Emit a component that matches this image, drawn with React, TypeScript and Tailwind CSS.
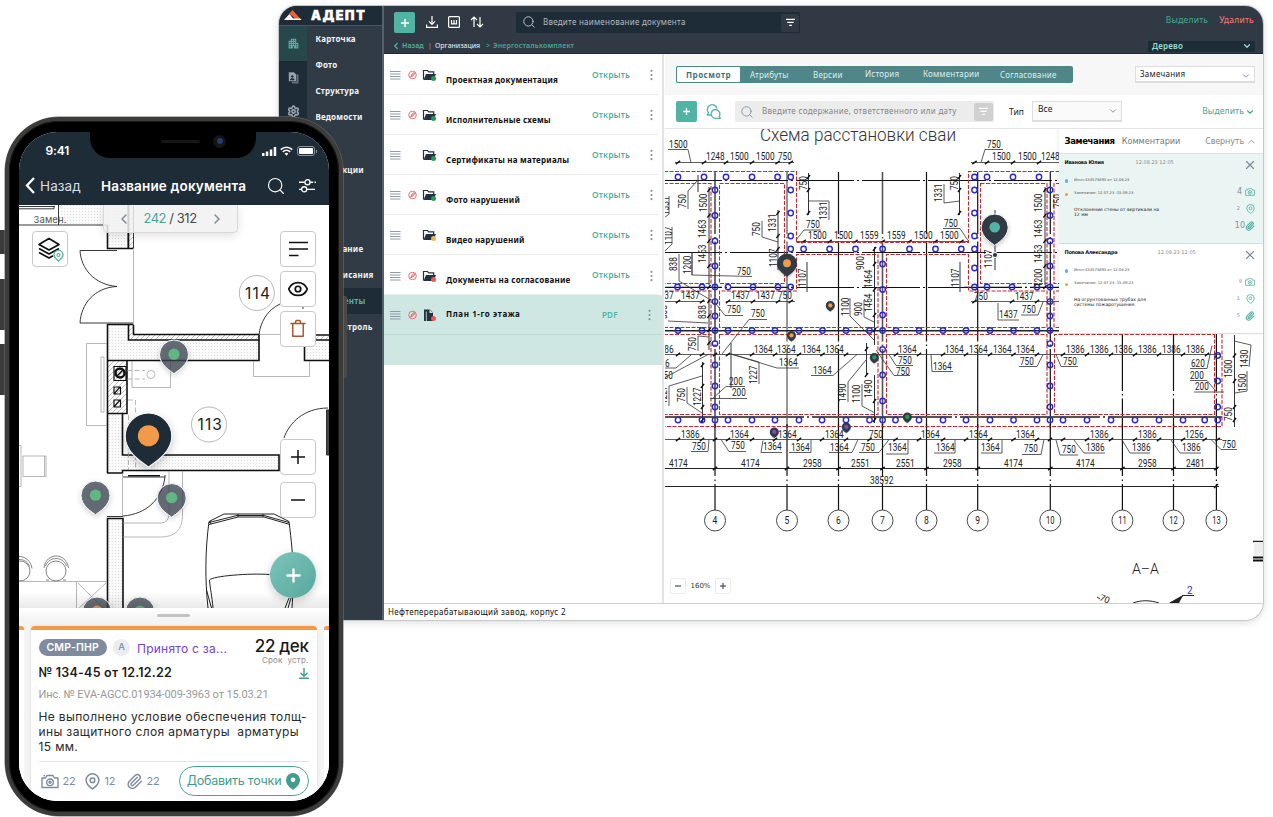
import React from "react";
import { Search, Settings, X, ChevronDown, ChevronUp, ChevronLeft, ChevronRight, Paperclip, Eye } from "lucide-react";
import { MdApartment } from "react-icons/md";

const DARK = "#1e2c38";
const TEAL = "#52b2a4";

/* ---------- shared drawings ---------- */

function Pin({ x, y, w, fill, dot, opacity = 1, outline = false }: { x: number; y: number; w: number; fill: string; dot: string; opacity?: number; outline?: boolean }) {
  const s = w / 46;
  return (
    <g transform={`translate(${x - w / 2} ${y}) scale(${s})`} style={{ filter: "drop-shadow(0 3px 4px rgba(0,0,0,.22))" }}>
      <path
        d="M23 53.5C19 50 0 40 0 23A23 23 0 0 1 46 23C46 40 27 50 23 53.5Z"
        fill={fill}
        fillOpacity={opacity}
        stroke={outline ? "#fff" : "none"}
        strokeWidth={outline ? 1 / s : 0}
      />
      <circle cx="23" cy="22.5" r={w < 12 ? 11 : w > 40 ? 10.5 : 9} fill={dot} />
    </g>
  );
}

function Camera({ className }: { className: string }) {
  return (
    <svg viewBox="0 0 18 14" className={className} fill="none" stroke="currentColor" strokeWidth="1.4">
      <path d="M1 3.5h3.6L6 1h6l1.400 2.500H17V13H1z" strokeLinejoin="round" />
      <circle cx="9" cy="7.800" r="3.300" />
      <circle cx="9" cy="7.800" r="1" />
      <path d="M2.500 1.200h1.500" />
    </svg>
  );
}

function PinOutline({ className }: { className: string }) {
  return (
    <svg viewBox="0 0 14 16" className={className} fill="none" stroke="currentColor" strokeWidth="1.4">
      <path d="M7 15C5.500 13.800 1 11.200 1 6.800a6 6 0 0 1 12 0C13 11.200 8.500 13.800 7 15z" strokeLinejoin="round" />
      <circle cx="7" cy="6.800" r="2.200" />
    </svg>
  );
}

function FilterLines({ className }: { className: string }) {
  return (
    <svg viewBox="0 0 10 10" className={className} stroke="currentColor" strokeWidth="1.3">
      <path d="M0 1.500h10M1.500 4.800h7M3.500 8.200h3" />
    </svg>
  );
}

/* ---------- sidebar ---------- */

const MENU = ["Карточка", "Фото", "Структура", "Ведомости", "", "Инспекции", "", "", "Замечание", "Предписания", "Документы", "Тех-контроль"];

function Sidebar() {
  return (
    <aside className="flex w-[105px] shrink-0 flex-col bg-[#56636e] pr-[2.5px]">
      <div className="flex h-[19.5px] shrink-0 items-center border-b border-[#4a5661] bg-[#1e2c38] pl-[5px]">
        <svg viewBox="0 0 18 10" className="h-[10px] w-[18px]">
          <path d="M0 10L5.500 4L9 8.500V10z" fill="#fff" />
          <path d="M5 4L8.500 0L17.500 10H12L8.500 6z" fill="#f0603a" />
          <path d="M8 8.500h8l1.500 1.500H8z" fill="#fff" />
        </svg>
        <span className="ml-[9px] mt-px font-[Inter] text-[12.5px] leading-none font-black tracking-[1.700px] text-white [-webkit-text-stroke:0.500px_#fff]">АДЕПТ</span>
      </div>
      <div className="flex min-h-0 flex-1">
        <div className="flex w-[28px] shrink-0 flex-col items-center bg-[#1e2c38]">
          <div className="flex h-[35px] w-full items-center justify-center bg-[#27474b] text-[#52b2a4]">
            <MdApartment className="size-[13px]" />
          </div>
          <div className="flex h-[34px] items-center">
            <svg viewBox="0 0 11 12" className="h-[12px] w-[11px]">
              <path d="M4 2.500h6.500V11.500H4z" fill="#66727d" />
              <path d="M.5 0H6l2.500 2.500V9.500H.5z" fill="#98a3ad" stroke="#1e2c38" strokeWidth=".6" />
              <circle cx="4.300" cy="4.500" r="1.200" fill={DARK} />
              <path d="M2 8.300c0-2.600 4.600-2.600 4.600 0z" fill={DARK} />
            </svg>
          </div>
          <div className="flex h-[34px] items-center text-[#98a3ad]">
            <Settings className="size-[13px]" strokeWidth={3} />
          </div>
        </div>
        <nav className="flex flex-1 flex-col bg-[#313b45]">
          {MENU.map((m, i) => (
            <span
              key={i}
              className={
                i === 10
                  ? "flex h-[26.25px] items-center whitespace-nowrap bg-[#1e2c38] pl-[8.500px] font-['Noto_Sans'] text-[8px] font-bold tracking-[0.200px] text-[#52b2a4]"
                  : "flex h-[26.25px] items-center whitespace-nowrap pl-[8.500px] font-['Noto_Sans'] text-[8px] font-bold tracking-[0.200px] text-[#f2f4f5]"
              }
            >
              {m}
            </span>
          ))}
        </nav>
      </div>
    </aside>
  );
}

/* ---------- header ---------- */

function Header() {
  return (
    <header className="flex h-[48px] shrink-0 flex-col border-b border-[#1e2c38] bg-[#313a44] font-['Noto_Sans']">
      <div className="flex h-[33px] items-center pl-[10px] pr-[9px]">
        <button className="flex size-[21px] items-center justify-center rounded-[2px] bg-[#52b2a4]">
          <svg viewBox="0 0 8 8" className="size-[8px]" stroke="#fff" strokeWidth="1.500"><path d="M4 0v8M0 4h8" /></svg>
        </button>
        <svg viewBox="0 0 12 12" className="mb-px ml-[11px] size-[12px]" fill="none" stroke="#fff" strokeWidth="1.200">
          <path d="M6 0v8M3 5.300l3 3 3-3M.6 8.500v2.900h10.800V8.500" />
        </svg>
        <svg viewBox="0 0 12 12" className="mb-px ml-[10px] size-[12px]" fill="none" stroke="#fff" strokeWidth="1.200">
          <rect x=".6" y=".6" width="10.800" height="10.800" rx="1" />
          <path d="M3.500 4v3.800h5V4M6 4v3.500" strokeWidth="1.200" />
        </svg>
        <svg viewBox="0 0 14 12" className="mb-px ml-[10px] h-[12px] w-[14px]" fill="none" stroke="#fff" strokeWidth="1.200">
          <path d="M4 11V1M1 4l3-3 3 3M10 1v10M7 8l3 3 3-3" />
        </svg>
        <div className="ml-[32px] flex h-[21px] w-[284px] items-center rounded-[2px] bg-[#1e2c38] pl-[6px] pr-px">
          <Search className="mb-px size-[14px] text-[#b9c0c6]" strokeWidth={1.700} />
          <span className="ml-[7px] whitespace-nowrap pb-[2px] text-[8px] tracking-[0.240px] text-[#b4bbc1]">Введите наименование документа</span>
          <span className="ml-auto flex size-[18px] items-center justify-center rounded-[2px] bg-[#313a44] text-white">
            <FilterLines className="size-[9px]" />
          </span>
        </div>
        <span className="ml-auto mt-[-4px] text-[8.500px] tracking-[0.200px] text-[#4aa595]">Выделить</span>
        <span className="ml-[11px] mt-[-4px] text-[8.500px] tracking-[0.250px] text-[#f28078]">Удалить</span>
      </div>
      <div className="flex h-[14px] items-center whitespace-nowrap pl-[7px] pr-[8px] text-[7px]">
        <ChevronLeft className="size-[10px] text-[#52b2a4]" strokeWidth={3} />
        <span className="ml-px w-[26px] font-bold text-[#4aa595]">Назад</span>
        <span className="w-[7px] text-[#99a3ab]">|</span>
        <span className="w-[51px] text-[#eef0f1]">Организация</span>
        <span className="w-[7px] text-[#4aa595]">&gt;</span>
        <span className="font-semibold tracking-[0.150px] text-[#4aa595]">Энергосталькомплект</span>
        <span className="ml-auto flex h-[11px] w-[107px] items-center justify-between bg-[#1e2c38] pl-[4px] pr-[3px] text-[8px] font-semibold tracking-[0.200px] text-[#8fe0d3]">
          Дерево
          <ChevronDown className="size-[10px]" strokeWidth={3} />
        </span>
      </div>
    </header>
  );
}

/* ---------- document list ---------- */

const DOCS = [
  { name: "Проектная документация", mark: true, dot: "#1f9d55" },
  { name: "Исполнительные схемы", mark: true, dot: "#1f9d55" },
  { name: "Сертификаты на материалы", mark: false, dot: "#1f9d55" },
  { name: "Фото нарушений", mark: true, dot: "#1f9d55" },
  { name: "Видео нарушений", mark: false, dot: "#f5b254" },
  { name: "Документы на согласование", mark: true, dot: "#f25555" },
];

function RowIcons({ mark, dot, file }: { mark: boolean; dot: string; file?: boolean }) {
  return (
    <svg viewBox="0 0 48 14" className="h-[14px] w-[48px] shrink-0">
      <path d="M0 3.500h10.500M0 6h10.500M0 8.500h10.500M0 11h10.500" stroke="#8f9baa" strokeWidth="1" />
      {mark && (
        <g fill="none" stroke="#f0605c" strokeWidth=".9">
          <circle cx="22.500" cy="7" r="3.800" />
          <path d="M19.800 9.700l5.400-5.400M21 8.500l.6-2 2.200-1.800 1 1-1.800 2.200z" />
        </g>
      )}
      {file ? (
        <g>
          <path d="M34 1.500h6l3 3V13h-9z" fill="#25323e" />
          <path d="M39.500 1.500v3.500h3.500z" fill="#cfe7e3" />
          <path d="M36.300 3.500v9.500" stroke="#cfe7e3" strokeWidth=".8" />
        </g>
      ) : (
        <g>
          <path d="M33.500 11.500V2.500h4l1.200 1.300h5V6" fill="none" stroke="#25323e" strokeWidth="1.200" />
          <path d="M33.500 12l2.500-6h10l-2.500 6z" fill="#25323e" />
        </g>
      )}
      <circle cx="43.500" cy="10.500" r="2.500" fill={dot} />
    </svg>
  );
}

function Dots() {
  return (
    <svg viewBox="0 0 3 12" className="h-[12px] w-[3px]" fill="#8793a1">
      <circle cx="1.500" cy="1.800" r="1.100" /><circle cx="1.500" cy="6" r="1.100" /><circle cx="1.500" cy="10.200" r="1.100" />
    </svg>
  );
}

function DocList() {
  return (
    <section className="flex w-[280px] shrink-0 flex-col border-r-2 border-[#e2e4e4] bg-white pt-[0.500px] font-['Noto_Sans']">
      {DOCS.map((d) => (
        <div key={d.name} className="mr-[4px] flex h-[40.100px] items-center border-b border-[#ececec] pt-[2px] pl-[6px]">
          <RowIcons mark={d.mark} dot={d.dot} />
          <span className="ml-[8px] w-[146px] whitespace-nowrap pt-[9px] text-[8px] font-bold tracking-[0.230px] text-[#101010]">{d.name}</span>
          <span className="w-[58px] text-[8.500px] font-semibold tracking-[0.150px] text-[#52b2a4]">Открыть</span>
          <Dots />
        </div>
      ))}
      <div className="h-[70px] bg-[#cfe7e3]">
        <div className="flex h-[39.500px] items-center border-b border-[#bfdad6] pt-px pl-[6px]">
          <RowIcons mark dot="#f25555" file />
          <span className="ml-[8px] w-[156px] whitespace-nowrap pb-px text-[8px] font-bold tracking-[0.600px] text-[#101010]">План 1-го этажа</span>
          <span className="w-[46px] text-[8px] font-semibold tracking-[0.200px] text-[#52b2a4]">PDF</span>
          <Dots />
        </div>
      </div>
    </section>
  );
}

/* ---------- pile plan ---------- */

type Label = [number, number, string];

const H_LABELS: Label[] = [
  [669, 148, "1500"], [706, 160, "1248"], [730, 160, "1500"], [756, 160, "1500"], [778, 160, "750"],
  [987, 148, "750"], [992, 160, "1500"], [1018, 160, "1500"], [1041, 160, "1248"],
  [806, 228, "750"], [944, 227, "750"],
  [808, 239, "1500"], [834, 239, "1500"], [860, 239, "1559"], [887, 239, "1559"], [914, 239, "1500"], [940, 239, "1500"],
  [737, 275, "750"], [731, 299, "1437"], [756, 299, "1437"], [778, 299, "750"], [655, 299, "1437"], [681, 299, "1437"],
  [727, 313, "750"], [751, 317, "750"],
  [655, 353, "1386"], [754, 353, "1364"], [777, 353, "1364"], [802, 353, "1364"], [825, 353, "1364"], [898, 353, "1364"], [945, 353, "1364"],
  [969, 353, "1364"], [993, 353, "1364"], [1016, 353, "1364"],
  [1066, 353, "1386"], [1090, 353, "1386"], [1114, 353, "1386"], [1138, 353, "1386"], [1162, 353, "1386"], [1186, 353, "1386"],
  [779, 366, "1364"], [813, 374, "1364"], [898, 364, "750"], [896, 375, "750"], [933, 370, "1364"],
  [729, 385, "200"], [732, 396, "200"], [651, 367, "1386"], [659, 379, "750"],
  [681, 438, "1386"], [730, 438, "1364"], [778, 438, "1364"], [825, 438, "1364"], [869, 438, "750"], [921, 438, "1364"],
  [969, 438, "1364"], [1016, 438, "1364"], [1090, 438, "1386"], [1138, 438, "1386"], [1185, 438, "1256"],
  [692, 450, "750"], [731, 449, "750"], [763, 450, "1364"], [791, 451, "1364"], [830, 451, "1364"], [861, 451, "750"],
  [888, 451, "1364"], [936, 451, "1364"], [981, 451, "1364"], [1024, 452, "750"], [1062, 453, "750"],
  [1086, 451, "1386"], [1132, 451, "1386"], [1182, 451, "1386"], [1222, 448, "750"],
  [669, 467, "4174"], [741, 467, "4174"], [803, 467, "2958"], [851, 467, "2551"], [896, 467, "2551"], [943, 467, "2958"],
  [1004, 467, "4174"], [1076, 467, "4174"], [1138, 467, "2958"], [1186, 467, "2481"], [870, 484, "38592"],
  [974, 300, "750"], [1015, 300, "1437"], [999, 318, "1437"], [1022, 313, "750"],
  [1020, 365, "750"], [1063, 365, "750"], [1191, 367, "620"], [1190, 379, "200"], [1195, 390, "200"],
];

const V_LABELS: Label[] = [
  [686, 208, "750"], [707, 212, "1500"], [706, 238, "1463"], [706, 263, "1463"], [691, 274, "1200"], [677, 271, "838"], [706, 319, "838"],
  [760, 236, "750"], [776, 232, "1331"], [777, 267, "1107"], [807, 190, "750"], [827, 220, "1331"], [942, 202, "1331"], [958, 190, "750"],
  [806, 287, "1107"], [959, 287, "1107"], [864, 270, "900"], [872, 288, "1464"], [872, 312, "1464"], [862, 316, "900"], [849, 316, "1100"],
  [669, 215, "1331"], [672, 245, "1107"], [667, 319, "838"], [696, 351, "750"], [685, 402, "750"], [701, 406, "1227"], [667, 404, "1227"], [757, 384, "1227"],
  [846, 402, "1490"], [860, 403, "1100"], [872, 398, "1490"],
  [1042, 212, "1500"], [1042, 238, "1463"], [1042, 263, "1463"], [1042, 287, "1200"], [1061, 208, "750"], [992, 268, "1107"],
  [1232, 378, "1500"], [1232, 421, "750"], [1248, 368, "1430"], [1246, 392, "1500"],
];

const LEADERS =
  "M668 149.500h20l3 13M985 149.500h18M985 149.500l-4 13M821 230h-17l-8 10M943 228.500h17l8 12M752 276.500L692 275V252M743 315.500h-18l-11-14M767 319.500h-18L722 354" +
  "M799 368h-22L731 354M811 375.500h22L857 354.500M913 365.500h-17l-7-11M910 375.500h-16L876 350M953 371.500h-21l-1-17M745 386.500h-19L712 399M710 398.500h37M691 451.500h17l1-12M746 451.500h-17l-8-12" +
  "M782 452.500h-21l2-12M789 452.500h22v-13M829 452.500h23l6-13M859 452.500h20l10-13M886 454h22v-14M934 453h21v-13M981 453h21v-13M1022 454.500h19l3-15M1078 455h-18l-4-15" +
  "M1105 453h-21l-10-13M1150 453h-20l-8-13M1201 453h-21l-9-13M1237 449.500h-16l-10-10M998 320h21M998 320v-17M1021 315h17l5-13M1019 366.500h18l6-12M1078 366.500h-17l-5-12" +
  "M1190 368.500h17l5-23M1190 380.500h17l10 12M1194 392h30M688 209v-18l10-11M692 275v-22M679 254v27l30 18M668 321l40 2M672 227v17l-8 8M669 196v18l-5 4M762 221v16l16 5M829 220v-19h-20M944 184v19l16-2" +
  "M850 298v18l24 24M864 300v17l10 5M698 351V336l11 1M687 387v16l15 10M669 406V386l33-10M759 384V362l-28-8M848 402v-20l18-22M862 384v22l13 7M664 378l45-24M664 368h12l15-13M1249 367l2-22-17-4M1247 371v20l-12 2";

const V_DIMS = "M709 187v98M698 175v17M778 210v60M808.500 173v42M959.500 173v42M807 262v30M960 262v30M874.500 247v98M866.500 343v32M874.500 375v48M709 290v60M702.500 362v60M731 343v45M1045 187v98M1234.500 335v92M995 210v60";

const PILES: number[][] = [
  [177, 678, 704, 726, 752, 777.6, 790.7, 974.5, 987, 1013, 1039],
  [249, 790.7, 803.6, 829.6, 855.5, 882.6, 909.5, 935.5, 961.3, 974.5],
  [287, 677.5, 702, 715, 728, 753, 778, 790.7, 974.5, 987, 1012, 1037, 1050],
  [330.5, 678, 702, 715, 728, 752, 775, 799, 822.5, 846, 869.5, 882.6, 896, 919, 943, 966, 990, 1013.5, 1037, 1050],
  [420, 678, 702, 715, 728, 752, 775, 799, 822, 846, 869.5, 882.6, 895.5, 919, 943, 966, 990, 1013.5, 1037, 1050, 1063, 1087, 1111, 1135, 1159, 1183, 1204.7, 1217.7],
];
const PILE_COLS: number[][] = [
  [715, 190, 215.5, 241, 266, 301.6, 316, 343.6, 365, 386, 407],
  [790.7, 190, 213, 236],
  [882.6, 264, 289.5, 315, 349.5, 375, 401],
  [974.5, 190, 213, 236, 268],
  [1050, 190, 215.5, 241, 266, 301.6, 316, 343.6, 365, 386, 407],
  [1217.7, 355.5, 381, 407],
];
const AXES: [number, number][] = [[715, 4], [787, 5], [838.5, 6], [882.5, 7], [926.5, 8], [977.7, 9], [1050.3, 10], [1122.4, 11], [1173.5, 12], [1216.4, 13]];
const TICKS: number[][] = [
  [162.5, 678, 704, 726, 752, 777.6, 790.7, 974.5, 987, 1013, 1039],
  [241.500, 803.6, 829.6, 855.5, 882.6, 909.5, 935.5, 961.3],
  [301.500, 678, 702, 728, 753, 778, 790.7, 974.5, 1012, 1037],
  [354.500, 678, 702, 715, 728, 752, 775, 799, 822.5, 846, 896, 919, 943, 966, 990, 1013.5, 1037, 1063, 1087, 1111, 1135, 1159, 1183, 1207],
  [439.500, 678, 702, 715, 728, 752, 775, 799, 822, 846, 869.5, 895.5, 919, 943, 966, 990, 1013.5, 1037, 1050, 1063, 1087, 1111, 1135, 1159, 1183, 1204.7, 1217.7],
  [468.500, 715, 787, 838.5, 882.5, 926.5, 977.7, 1050.3, 1122.4, 1173.5, 1216.4],
];
const V_TICKS: number[][] = [
  [709, 190, 215.5, 241, 266, 287, 301, 316, 330, 343],
  [778, 213, 236, 249], [808.5, 177, 190, 213], [959.5, 177, 190, 213], [874.5, 249, 264, 289.5, 315, 330, 401, 420],
  [866.5, 349, 375], [702.5, 365, 386, 407, 420], [1045, 190, 215.5, 241, 266, 287], [1234.500, 355.5, 381, 407, 420],
];

const RED =
  "M664 171.500h132.500v71h172v-71H1060M664 183.500h47v100h-47M719.500 183.500h65v100h-65zM664 291h47v36.500h-47M719.500 327.500V291h77v-36.500H878v73zM886.500 327.500v-73h82V291H1047v36.500zM980.500 183.500H1047v100h-66.500zM1060 183.500h-6v100h6M1060 291h-6v36.500h6" +
  "M664 334.500h47v80h-47M719.500 334.500H878v80H719.500zM886.500 334.500H1047v80H886.500zM1214.500 334v80.500h-160v-80h160M1222 334v92.500H664";

function Plan() {
  return (
    <svg viewBox="665 129 598 474" className="block h-[474px] w-[598px]" fill="none">
      <text x="760" y="141" fontFamily="Roboto, sans-serif" fontWeight="300" fontSize="17.500" fill="#333" textLength="196" lengthAdjust="spacingAndGlyphs">Схема расстановки сваи</text>
      <g stroke="#111" strokeWidth="1.200">
        {AXES.map(([x, n]) => (
          <g key={n}>
            <path d={`M${x} ${n > 10 ? 334 : 172}V428`} strokeDasharray={n > 10 ? "57 3 1.500 3" : "82 3 1.500 3 100 3 1.500 3"} strokeDashoffset={n > 10 ? 0 : 20} strokeWidth={n === 7 ? 1.600 : 1.200} stroke={n === 5 || n === 7 ? "#555" : "#111"} />
            <path d={`M${x} 424V476M${x} 484v1.500M${x} 479.500v1.500M${x} 484V510`} strokeWidth={1.200} />
            <circle cx={x} cy="520.500" r="10.500" strokeWidth=".9" stroke="#333" />
          </g>
        ))}
        <path d="M664 180.500H1060M664 252.500H1060M664 287.300H796M964 287.300H1060M796 287.500h172" strokeDasharray="58 3 2 3" />
        <path d="M664 330.700H1060" stroke="#222" strokeWidth="1.400" />
        <path d="M664 417H1222" stroke="#555" strokeWidth="1.800" strokeDasharray="140 3 2 3" />
      </g>
      <g stroke="#333" strokeWidth=".8">
        <path d="M675 162.500H794M971 162.500H1060M796 241.500H968M664 301.500h41M726 301.500H795M971 301.500H1060M664 354.500H1220M664 439.500H1222" />
        <path d="M664 468.500H1218M664 486.500H1219" stroke="#222" strokeWidth="1" />
        <path d={V_DIMS} strokeWidth="1" />
        <path d={LEADERS} />
      </g>
      <g stroke="#111" strokeWidth="1.300">
        {TICKS.map((r) => r.slice(1).map((x) => <path key={`${r[0]}-${x}`} d={`M${x - 2.2} ${r[0] + 1.6}l4.400-3.200`} />))}
        {V_TICKS.map((r) => r.slice(1).map((y) => <path key={`${r[0]}-${y}`} d={`M${r[0] - 1.6} ${y + 2}l3.200-4`} />))}
        <path d="M1214 488l4-4" />
      </g>
      <path d={RED} stroke="#c02a30" strokeWidth="1.100" strokeDasharray="4 1.500" />
      <g stroke="#2a2ac8" strokeWidth="1.400">
        {PILES.map((r) => r.slice(1).map((x) => <circle key={`${r[0]}-${x}`} cx={x} cy={r[0]} r="2.700" />))}
        {PILE_COLS.map((r) => r.slice(1).map((y) => <circle key={`${r[0]}-${y}`} cx={r[0]} cy={y} r="2.700" />))}
      </g>
      <g fontFamily="Roboto, sans-serif" fontSize="10.200" fill="#222">
        {H_LABELS.map(([x, y, t], i) => (
          <text key={i} x={x} y={y} textLength={t.length * 4.8 - 0.6} lengthAdjust="spacingAndGlyphs">{t}</text>
        ))}
        {V_LABELS.map(([x, y, t], i) => (
          <text key={i} transform={`translate(${x} ${y}) rotate(-90)`} textLength={t.length * 4.6} lengthAdjust="spacingAndGlyphs">{t}</text>
        ))}
        {AXES.map(([x, n]) => (
          <text key={n} x={x} y="524.300" textAnchor="middle" textLength={n > 9 ? 8.500 : 4.800} lengthAdjust="spacingAndGlyphs">{n}</text>
        ))}
      </g>
      <g fontFamily="Roboto, sans-serif" fill="#222">
        <text x="1132" y="573.500" fontSize="15" fontWeight="300" textLength="27" lengthAdjust="spacingAndGlyphs">А–А</text>
        <text transform="translate(1099 600) rotate(22)" fontSize="9" textLength="10">70</text>
        <text x="1187" y="594" fontSize="10" fill="#2a2ac8">2</text>
      </g>
      <path d="M1097 597l3 2M1194 595.500h-11L1170 603M1183 595.500l-10 8M1133 603c8-3 17-3 26 0" stroke="#222" strokeWidth="1" />
      <path d="M1183 595.500L1169 603h10z" fill="#222" />
      <path d="M1253 541.500h10" stroke="#222" strokeWidth="1.400" />
      <path d="M1254 542h9v14h-9z" fill="#eee" />
      <path d="M1253 557.500h10M1253 560.500h10" stroke="#111" strokeWidth="1.800" />
      <Pin x={787} y={253.500} w={20} fill="#313b45" dot="#f2994a" />
      <Pin x={994.700} y={214} w={27} fill="#313b45" dot={TEAL} outline />
      <circle cx="995" cy="255" r="2.600" fill="#313b45" stroke="#fff" />
      <Pin x={830.300} y={301} w={9} fill="#313b45" dot="#f2994a" />
      <Pin x={791.500} y={331} w={9} fill="#313b45" dot="#f2994a" />
      <Pin x={874.300} y={353} w={9} fill="#313b45" dot="#1f9d55" />
      <Pin x={907.300} y={412.500} w={9} fill="#313b45" dot="#1f9d55" />
      <Pin x={774.300} y={427.500} w={9} fill="#313b45" dot="#8e44ad" />
      <Pin x={846.300} y={422.500} w={9} fill="#313b45" dot="#8e44ad" />
    </svg>
  );
}

/* ---------- remarks panel ---------- */

function Remark({ author, gap, lines, counts, active }: { author: string; gap: string; lines: [string, string]; counts: [string, string, string]; active?: boolean }) {
  const num = active ? "text-[8px] text-[#86909a]" : "text-[5px] text-[#86909a]";
  return (
    <article className={active ? "flex h-[90px] border-b border-[#cfdedd] bg-[#eaf4f3]" : "flex h-[90px] border-b border-[#dcdcdc] bg-white"}>
      <div className="flex-1 whitespace-nowrap pl-[6px] pt-[6px] text-[5px] leading-[5px] text-[#333]">
        <div className="flex">
          <span className={gap}>{author}</span>
          <span className="text-[#8b8b8b]">12.08.23 12:05</span>
        </div>
        <div className="mt-[11px] flex items-center text-[3.800px] tracking-[-0.050px] text-[#555]">
          <i className="mt-[3px] mr-[6px] size-[3.500px] rounded-full bg-[#5fb0ef]" />Инсп:434573893 от 12.08.23
        </div>
        <div className="mt-[7px] flex items-center text-[3.800px] tracking-[-0.050px] text-[#555]">
          <i className="mt-[3px] mr-[6px] size-[3.500px] rounded-full bg-[#f2994a]" />Замечание: 12.07.23 -15.09.23
        </div>
        <p className="mt-[11px] pl-[9.500px] text-[4.500px] leading-[5px] text-[#111]">{lines[0]}<br />{lines[1]}</p>
      </div>
      <div className="flex w-[30px] flex-col items-end pr-[8px] pt-[4px] text-[#52b2a4]">
        <X className="mr-[-2px] size-[14px] text-[#7e8b99]" strokeWidth={2} />
        <div className="mt-[14px] flex h-[12px] items-center gap-[3px]"><span className={num}>{counts[0]}</span><Camera className="h-[8px] w-[10px]" /></div>
        <div className="mt-[5px] flex h-[12px] items-center gap-[6px]"><span className="text-[5px] text-[#86909a]">{counts[1]}</span><PinOutline className="h-[10px] w-[9px]" /></div>
        <div className="mt-[5px] flex h-[12px] items-center"><span className={active ? num : "mr-[5px] text-[5px] text-[#86909a]"}>{counts[2]}</span><Paperclip className="size-[10px]" strokeWidth={2.600} /></div>
      </div>
    </article>
  );
}

function Remarks() {
  return (
    <div className="absolute top-0 right-0 w-[204.500px] bg-white font-['DejaVu_Sans'] shadow-[-2px_0_3px_rgba(0,0,0,0.050)]">
      <div className="flex h-[25px] items-center border-b border-[#dfe3e3] pt-px pl-[6px] pr-[6px] text-[8px]">
        <span className="text-[8.500px] font-bold tracking-[-0.350px] text-black">Замечания</span>
        <span className="ml-[7px] text-[8.200px] tracking-[-0.050px] text-[#777]">Комментарии</span>
        <span className="ml-auto text-[8px] tracking-[-0.100px] text-[#888]">Свернуть</span>
        <ChevronUp className="ml-[2px] size-[11px] text-[#888]" strokeWidth={1.800} />
      </div>
      <Remark active author="Иванова Юлия" gap="w-[71px] font-bold text-[#111] tracking-[-0.250px]" lines={["Отклонение стены от вертикали на", "12 мм"]} counts={["4", "2", "10"]} />
      <Remark author="Попова Александра" gap="w-[93px] font-bold text-[#111] tracking-[-0.300px]" lines={["На огрунтованных трубах для", "системы пожаротушения"]} counts={["9", "1", "5"]} />
    </div>
  );
}

/* ---------- viewer ---------- */

function Viewer() {
  return (
    <section className="flex min-w-0 flex-1 flex-col pl-px font-['Noto_Sans']">
      <div className="flex h-[41px] items-start bg-[#f7f7f7] pt-[12px] pl-[11px] pr-[8px] text-[8px] text-[#dcefee]">
        <div className="flex h-[17px] w-[397px] items-center whitespace-nowrap rounded-[2px] bg-[#4f8789] tracking-[0.200px]">
          <span className="flex h-full w-[65px] items-center justify-center rounded-[2px] border border-[#4f8789] bg-white font-bold tracking-[0.500px] text-[#3f7577]">Просмотр</span>
          <span className="ml-[9px] w-[63px] pt-px">Атрибуты</span>
          <span className="w-[52px]">Версии</span>
          <span className="w-[58px] pb-px">История</span>
          <span className="w-[77px] pb-px">Комментарии</span>
          <span>Согласование</span>
        </div>
        <div className="ml-auto flex h-[17px] w-[120px] items-center justify-between border border-b-2 border-[#dedede] bg-white pl-[4px] pr-[3px] tracking-[0.250px] text-[#222]">
          <span className="pb-px">Замечания</span>
          <ChevronDown className="mt-[4px] size-[10px] text-[#7e8b99]" strokeWidth={2.200} />
        </div>
      </div>
      <div className="flex h-[34px] items-center border-b border-[#e3e5e5] pl-[11px] pr-[8px] text-[8px]">
        <button className="flex size-[21px] items-center justify-center rounded-[2px] bg-[#52b2a4]">
          <svg viewBox="0 0 8 8" className="size-[7px]" stroke="#fff" strokeWidth="1.500"><path d="M4 0v8M0 4h8" /></svg>
        </button>
        <svg viewBox="0 0 15 15" className="ml-[9px] size-[15px]" fill="none" stroke="#52b2a4" strokeWidth="1.300" strokeLinejoin="round">
          <path d="M4.800 11H1.200l1.300-2.200A4.900 4.900 0 1 1 11 4.500" />
          <path d="M13.200 12.300l1.200 2h-4.600a4.400 4.400 0 1 1 3.400-2z" />
        </svg>
        <div className="ml-[14px] flex h-[21px] w-[259px] items-center rounded-[2px] bg-[#ececec] pl-[5px] pr-[1px]">
          <Search className="size-[14px] text-[#8e9aa8]" strokeWidth={1.700} />
          <span className="ml-[8px] whitespace-nowrap pb-px text-[8px] tracking-[0.310px] text-[#858585]">Введите содержание, ответственного или дату</span>
          <span className="ml-auto flex h-[18px] w-[19px] items-center justify-center rounded-[2px] bg-[#d0d0d0] text-white"><FilterLines className="size-[9px]" /></span>
        </div>
        <span className="mt-[2px] ml-[15px] w-[23px] text-[8.500px] text-[#222]">Тип</span>
        <div className="flex h-[21px] w-[90px] items-center justify-between border border-b-2 border-[#dedede] bg-[#fafafa] pl-[5px] pr-[3px] text-[8.500px] text-[#222]">
          <span className="mb-[3px]">Все</span>
          <ChevronDown className="size-[10px] text-[#7e8b99]" strokeWidth={2.200} />
        </div>
        <span className="ml-auto text-[8.500px] tracking-[0.150px] text-[#4aa595]">Выделить</span>
        <ChevronDown className="ml-px size-[10px] text-[#4aa595]" strokeWidth={2.800} />
      </div>
      <div className="relative h-[474px] overflow-hidden bg-white">
        <Plan />
        <Remarks />
        <div className="absolute bottom-[9px] left-[5px] flex items-center font-['DejaVu_Sans'] text-[7px] text-[#333]">
          <span className="flex size-[16px] items-center justify-center rounded-[2px] border border-[#ececec] bg-white"><svg viewBox="0 0 6 6" className="size-[6px]" stroke="#25323e"><path d="M0 3h6" /></svg></span>
          <span className="w-[29px] text-center">160%</span>
          <span className="flex size-[16px] items-center justify-center rounded-[2px] border border-[#ececec] bg-white"><svg viewBox="0 0 6 6" className="size-[6px]" stroke="#25323e"><path d="M0 3h6M3 0v6" /></svg></span>
        </div>
      </div>
    </section>
  );
}

function DesktopWindow() {
  return (
    <div className="absolute top-[6px] left-[279px] flex h-[614px] w-[984px] overflow-hidden rounded-[18px] bg-white shadow-[0_0_0_1px_#c4c9c9,0_2px_9px_rgba(0,0,0,0.160)]">
      <Sidebar />
      <main className="flex min-w-0 flex-1 flex-col">
        <Header />
        <div className="flex min-h-0 flex-1">
          <DocList />
          <Viewer />
        </div>
        <footer className="flex h-[17px] shrink-0 items-center border-t border-[#cfcfcf] pl-[4px] font-['Noto_Sans'] text-[8px] tracking-[0.340px] text-[#111]">Нефтеперерабатывающий завод, корпус 2</footer>
      </main>
    </div>
  );
}

/* ---------- phone ---------- */

function FloorPlan() {
  const thin = { stroke: "#9a9a9a", strokeWidth: 0.7 };
  return (
    <svg viewBox="19 205 310 403" className="block h-[403px] w-[310px]" fill="none">
      <defs>
        <pattern id="dots" width="3" height="3" patternUnits="userSpaceOnUse"><rect width="3" height="3" fill="#fafafa" /><circle cx="1.500" cy="1.500" r=".5" fill="#d2d2d2" /></pattern>
        <pattern id="hatch" width="5" height="5" patternUnits="userSpaceOnUse"><path d="M0 5L5 0" stroke="#999" strokeWidth=".6" /></pattern>
        <linearGradient id="fade" x1="0" y1="0" x2="0" y2="1"><stop offset="0" stopColor="#000" stopOpacity="0" /><stop offset="1" stopColor="#000" stopOpacity=".09" /></linearGradient>
      </defs>
      <path d="M58 205h70v20H58zM107 225h21v24h-21zM107 325h21v36h-21zM128 341h131v19H128zM304 341h25v19h-25zM107 413h15.500v60H107zM122 455h157v15H122zM107 518h16v90h-16z" fill="url(#dots)" />
      <path d="M129 205h5v44h-5zM129 325h5v10h125v5H129zM107 361h20v52h-20zM316 335h13v5h-13z" fill="url(#hatch)" />
      <g stroke="#222" strokeWidth=".9">
        <path d="M19 206.500h36M19 208.800h35v-3M58.500 205v20M19 225h88M128 205v43M133.500 205v43M80 250.500h37M80 250.500c1 18 14 34 37 36-23 1-36 18-37 36.500h53M259 335c1-12 8-25 21-31M303 306v3" />
        <path d="M165 477c-3 22-18 37-42 39M123 477h42v-2M284 438c5-15 20-30 44-30M123 516.500h-16" />
        <path d="M326.500 410h3v45h-3z" fill="#444" />
      </g>
      <g stroke="#111" strokeWidth="1.600">
        <path d="M107.500 225v23.500h26M128.500 205v43M107.500 361V324.500h26M107.500 413V473M128.500 325v15H259v-5.500H133.500V325M259 335v25.500H107M329 335h-13M329 340h-13M329 360.500h-24.500V346M127 361v52.500h-20M107.500 361v52M122.500 414v41H279v15.500H122.500v2.500h-15.500M107.500 608v-89.500h15.500V608M128 475.800h32" />
        <path d="M114 366.500h12v14h-12zM114 387h6.500v7H114zM114 400h6.500v7H114zM114 394l6-7M114 407l6-7" strokeWidth="1.200" />
        <circle cx="120" cy="373" r="4.500" strokeWidth="2.500" />
        <path d="M117 376l6-6" />
      </g>
      <g {...thin}>
        <path d="M133.500 250v74M259 334.500h45M253.500 361v15.500h56V361M132 361v26.500h38.500V361M86.500 343.500H107M86.500 343.500v82H107M101 357h3v55h-3zM23 456h23v20.500H23zM44.500 456v20M19 445.500h2v41h-2M122.500 473v43M169 471v42q0 10-8 10h-38M182.500 471v44q0 22-22 22H123M19 581.500h88M76.500 608v-26.500M78 583l27 27M106 583l-29 27" />
        <path d="M127 370.500h18M127 379h18M128 400h7.500M135.500 400v13M128.500 415v55M135.500 425v45" strokeDasharray="5 2.500" />
        <circle cx="151" cy="374.500" r="4" />
      </g>
      <g stroke="#777" strokeWidth=".9">
        <circle cx="56" cy="571" r="10" /><path d="M44 568c2-16 22-16 24.500 0M45.500 566c4-10 17-10 21 0M46 580h3M63 580h3" />
        <circle cx="20" cy="571" r="10" /><path d="M19 556.500c7 0 12 5 13 12M19 559.500c6 0 9 3 10.500 7" />
      </g>
      <g stroke="#222" strokeWidth="1">
        <path d="M208 608c-3-28-3-56 1-86.500l15-7.500h50l15 7.500c5 40 5 55 3 86.500M209 522.500l28-7M209 524.500l29-7.500h26l26 7.500M210 521l1 3M236 515.500h28l25 7M238 514v3M263 514v3M213 608c-1-12-3-20-3.500-28 3-4 40-7 60-5.500M206.500 590l5 18M285 608l4-10M291 598l-3 10" />
      </g>
      <g fontFamily="Inter, sans-serif" fontSize="15.500" fill="#222" textAnchor="middle">
        <circle cx="256.800" cy="293" r="17.500" fill="#fff" stroke="#999" strokeWidth=".7" />
        <text x="257.500" y="298.500" textLength="25">114</text>
        <circle cx="209" cy="424.500" r="17.500" fill="#fff" stroke="#999" strokeWidth=".7" />
        <text x="209.700" y="430" textLength="24.500">113</text>
      </g>
      <text x="33.500" y="223" fontFamily="Inter, sans-serif" fontSize="9.500" fill="#555" textLength="33">Замен.</text>
      <Pin x={174} y={340} w={29} fill="#3d4652" opacity={0.75} dot="#62b584" outline />
      <Pin x={95.500} y={481} w={29} fill="#3d4652" opacity={0.75} dot="#62b584" outline />
      <Pin x={171.700} y={483.500} w={29} fill="#3d4652" opacity={0.75} dot="#62b584" outline />
      <Pin x={97} y={597} w={29} fill="#3d4652" opacity={0.75} dot="#e59a50" outline />
      <Pin x={140} y={597} w={29} fill="#3d4652" opacity={0.75} dot="#62b584" outline />
      <Pin x={148.500} y={413} w={46.500} fill={DARK} dot="#f2994a" outline />
      <rect x="19" y="592" width="310" height="16" fill="url(#fade)" />
    </svg>
  );
}

function MapButton({ children }: { children: React.ReactNode }) {
  return <button className="flex size-[36px] items-center justify-center rounded-[4px] border border-[#c9c9c9] bg-white text-[#111]">{children}</button>;
}

function Phone() {
  return (
    <div className="absolute top-[117px] left-[5px] h-[699px] w-[338px]">
      <i className="absolute top-[113px] left-[-5px] h-[24px] w-[5px] bg-[#3b3b3b]" />
      <i className="absolute top-[162px] left-[-5px] h-[51px] w-[5px] bg-[#3b3b3b]" />
      <i className="absolute top-[227px] left-[-5px] h-[51px] w-[5px] bg-[#3b3b3b]" />
      <i className="absolute top-[179px] right-[-4px] h-[82px] w-[5px] rounded-r-[2px] bg-[#4a4846]" />
      <div className="relative flex h-full w-full flex-col rounded-[54px] border-[4px] border-[#3c3c3b] bg-black pt-[11px] pr-[10.500px] pb-[11px] pl-[10px] shadow-[inset_0_0_0_1px_#1a1a1a,0_0_0_0.500px_#777]">
        <div className="relative flex min-h-0 flex-1 flex-col overflow-hidden rounded-[38px] bg-white font-[Inter]">
          <header className="flex h-[73px] shrink-0 flex-col bg-[#1e2c38] text-white">
            <div className="flex h-[38px] items-center pl-[26.500px] pr-[12px]">
              <span className="text-[12px] font-semibold tracking-[-0.100px]">9:41</span>
              <svg viewBox="0 0 15 9" className="ml-auto h-[9px] w-[15px]" fill="#fff"><path d="M0 6h2.500v3H0zM3.800 4.500h2.500V9H3.800zM7.800 2.500h2.500V9H7.800zM11.700 0h2.500v9h-2.500z" /></svg>
              <svg viewBox="0 0 14 10" className="ml-[3px] h-[10px] w-[13px]" fill="none" stroke="#fff" strokeWidth="1.700"><path d="M.8 3.500c3.600-3.400 8.800-3.400 12.400 0M3 6c2.400-2.200 5.600-2.200 8 0" /><path d="M5 7.700c1.200-1 2.800-1 4 0L7 10z" fill="#fff" stroke="none" /></svg>
              <span className="ml-[4px] h-[10px] w-[18px] rounded-[3px] border border-[#8b959c] p-px"><i className="block h-full w-full rounded-[1px] bg-white" /></span>
              <i className="ml-px h-[3px] w-px bg-[#8b959c]" />
            </div>
            <div className="flex h-[31px] items-center whitespace-nowrap pl-[6px]">
              <svg viewBox="0 0 10 17" className="h-[17px] w-[10px]" fill="none" stroke="#fff" strokeWidth="2.300"><path d="M9 1L2 8.500 9 16" /></svg>
              <span className="ml-[5px] w-[61px] pt-px text-[13.500px] tracking-[0.100px] text-[#d9dde0]">Назад</span>
              <span className="w-[165px] pt-px text-[13.500px] font-semibold tracking-[0.160px]">Название документа</span>
              <Search className="size-[20px]" strokeWidth={1.400} />
              <svg viewBox="0 0 18 16" className="ml-[13px] h-[16px] w-[17px]" fill="none" stroke="#fff" strokeWidth="1.400">
                <path d="M0 4h6M12 4h3M16.500 4H18M0 11.500h2.500M8.500 11.500H17" /><circle cx="9" cy="4" r="2.700" /><circle cx="5.500" cy="11.500" r="2.700" />
              </svg>
            </div>
          </header>
          <div className="relative h-[403px] shrink-0 overflow-hidden">
            <FloorPlan />
            <div className="absolute top-0 left-[83.500px] flex h-[28px] w-[135px] items-center justify-center rounded-b-[5px] border-x border-b border-[#d8d8d8] bg-[#f1f1f1]/85 text-[13px] text-[#4a4a4a] shadow-[0_3px_10px_rgba(0,0,0,0.120)]">
              <ChevronLeft className="size-[16px] text-[#7e8b9b]" strokeWidth={2.200} />
              <span className="w-[77px] text-center tracking-[-0.450px]"><b className="font-normal text-[#4aa595]">242</b> / 312</span>
              <ChevronRight className="size-[16px] text-[#7e8b9b]" strokeWidth={2.200} />
            </div>
            <div className="absolute top-[25.500px] left-[13px]">
              <MapButton>
                <svg viewBox="0 0 28 26" className="h-[26px] w-[28px]" fill="none" stroke="#111" strokeWidth="1.700" strokeLinejoin="round">
                  <path d="M13 2.500L23 8.500l-10 5.500L3 8.500z" /><path d="M3 12.500l10 5.500 10-5.500M3 16.500l10 5.500 4-2.200" />
                  <path d="M22.500 25c-1-1-4.500-3-4.500-6.200a4.500 4.500 0 0 1 9 0C27 22 23.500 24 22.500 25z" fill="#fff" stroke="#52b2a4" strokeWidth="1.300" /><circle cx="22.500" cy="19" r="1.500" stroke="#52b2a4" strokeWidth="1.200" />
                </svg>
              </MapButton>
            </div>
            <div className="absolute top-[25.500px] right-[13px] flex flex-col gap-[4px]">
              <MapButton><svg viewBox="0 0 20 16" className="h-[16px] w-[20px]" stroke="#111" strokeWidth="1.500"><path d="M1 1.500h19M1 8h19M1 14.500h9.500" /></svg></MapButton>
              <MapButton><Eye className="size-[22px]" strokeWidth={1.900} /></MapButton>
              <MapButton><svg viewBox="0 0 16 20" className="h-[19px] w-[16px]" fill="none" stroke="#a65235" strokeWidth="1.500"><path d="M0 4.800h16M2.500 5v13.200h11V5M5 4.500l1-3h4l1 3" strokeLinejoin="round" /></svg></MapButton>
            </div>
            <div className="absolute top-[234px] right-[13px] flex flex-col gap-[7px]">
              <MapButton><svg viewBox="0 0 14 14" className="size-[14px]" stroke="#111" strokeWidth="1.500"><path d="M7 0v14M0 7h14" /></svg></MapButton>
              <MapButton><svg viewBox="0 0 14 14" className="size-[14px]" stroke="#111" strokeWidth="1.500"><path d="M0 7h14" /></svg></MapButton>
            </div>
            <button className="absolute top-[347px] right-[12.500px] flex size-[46px] items-center justify-center rounded-full bg-linear-135 from-[#7dc4bb] to-[#56a89d] shadow-[0_3px_10px_rgba(0,0,0,0.200)]">
              <svg viewBox="0 0 15 15" className="size-[15px]" stroke="#fff" strokeWidth="2.300" strokeLinecap="round"><path d="M7.500 1.300v12.400M1.300 7.500h12.400" /></svg>
            </button>
          </div>
          <div className="flex min-h-0 flex-1 flex-col bg-linear-to-b from-white to-[#f4f4f4] to-[12px]">
            <div className="flex h-[18px] shrink-0 justify-center pt-[6px]"><i className="h-[3px] w-[33px] rounded-full bg-[#c2c2c2]" /></div>
            <div className="flex min-h-0 flex-1 justify-between">
              <div className="w-[5px] rounded-tr-[3px] border-t-[4px] border-[#f2994a] bg-white" />
              <article className="flex w-[286.500px] flex-col whitespace-nowrap rounded-t-[4px] border-t-[4px] border-[#f2994a] bg-white pt-[6px] pl-[8px] pr-[8.500px] shadow-[0_0_3px_rgba(0,0,0,0.120)]">
                <div className="flex h-[32px] items-start">
                  <span className="mt-[3px] flex h-[17px] w-[68.500px] items-center justify-center rounded-full bg-[#7f8c9d] text-[10.500px] font-semibold tracking-[0.200px] text-white">СМР-ПНР</span>
                  <span className="mt-[3px] ml-[6px] flex size-[17px] items-center justify-center rounded-full bg-[#ececf3] text-[9.500px] font-medium text-[#7f8c9d]">А</span>
                  <span className="mt-[4px] ml-[7px] text-[12px] leading-[17px] tracking-[0.250px] text-[#7540d6]">Принято с за...</span>
                  <span className="ml-auto flex flex-col items-end">
                    <span className="text-[17px] leading-[21px] font-medium tracking-[-0.350px] text-[#1a1a1a]">22 дек</span>
                    <span className="text-[8px] leading-[6px] tracking-[0.200px] text-[#8e8e8e]">Срок&nbsp; устр.</span>
                  </span>
                </div>
                <div className="flex h-[11px] items-center justify-between text-[12.500px] font-semibold tracking-[0.220px] text-[#1a1a1a]">
                  № 134-45 от 12.12.22
                  <svg viewBox="0 0 10 11" className="h-[11px] w-[10px]" fill="none" stroke="#3f9c8e" strokeWidth="1.400"><path d="M5 0v8M1.500 4.800L5 8.200l3.500-3.400M0 10.300h10" /></svg>
                </div>
                <div className="mt-[7px] h-[18px] font-[Roboto] text-[11px] leading-[18px] tracking-[-0.110px] text-[#999]">Инс. № EVA-AGCC.01934-009-3963 от 15.03.21</div>
                <p className="mt-[5px] text-[12px] leading-[15px] tracking-[0.360px] text-[#2a2a2a]">
                  Не выполнено условие обеспечения толщ-<br />ины защитного слоя арматуры&nbsp; арматуры<br />15 мм.
                </p>
                <div className="mt-[7px] flex h-[39px] items-center border-t border-[#e3e3e3] text-[11px] tracking-[-0.300px] text-[#7f8c9d]">
                  <Camera className="ml-[2px] h-[15px] w-[18px]" />
                  <span className="ml-[4px] w-[22px]">22</span>
                  <PinOutline className="h-[17px] w-[15px]" />
                  <span className="ml-[5px] w-[21px]">12</span>
                  <Paperclip className="size-[17px]" strokeWidth={2} />
                  <span className="ml-[4px]">22</span>
                  <button className="ml-auto flex h-[30px] w-[130px] items-center justify-center rounded-full border border-[#4aa595] text-[12.500px] text-[#3f9c8e]">
                    <span className="tracking-[-0.220px]">Добавить точки</span>
                    <svg viewBox="0 0 14 17" className="ml-[5px] h-[17px] w-[14px]"><path d="M7 17C5.500 15.500 0 12.500 0 7a7 7 0 0 1 14 0c0 5.500-5.500 8.500-7 10z" fill="#3f9c8e" /><circle cx="7" cy="6.800" r="2.400" fill="#fff" /></svg>
                  </button>
                </div>
              </article>
              <div className="w-[5px] rounded-tl-[3px] border-t-[4px] border-[#f2994a] bg-white" />
            </div>
          </div>
          <div className="absolute top-0 left-[71px] flex h-[26px] w-[166px] items-center justify-center rounded-b-[20px] bg-black">
            <i className="mt-[-8px] ml-[41px] h-[3px] w-[39px] rounded-full bg-[#161616]" />
            <i className="mt-[-8px] ml-[13px] flex size-[13px] items-center justify-center rounded-full bg-[#141414]"><b className="size-[6px] rounded-full bg-[#203c74]" /></i>
          </div>
        </div>
      </div>
    </div>
  );
}

export default function App() {
  return (
    <div className="relative h-[817px] w-[1273px] overflow-hidden bg-white">
      <DesktopWindow />
      <Phone />
    </div>
  );
}
